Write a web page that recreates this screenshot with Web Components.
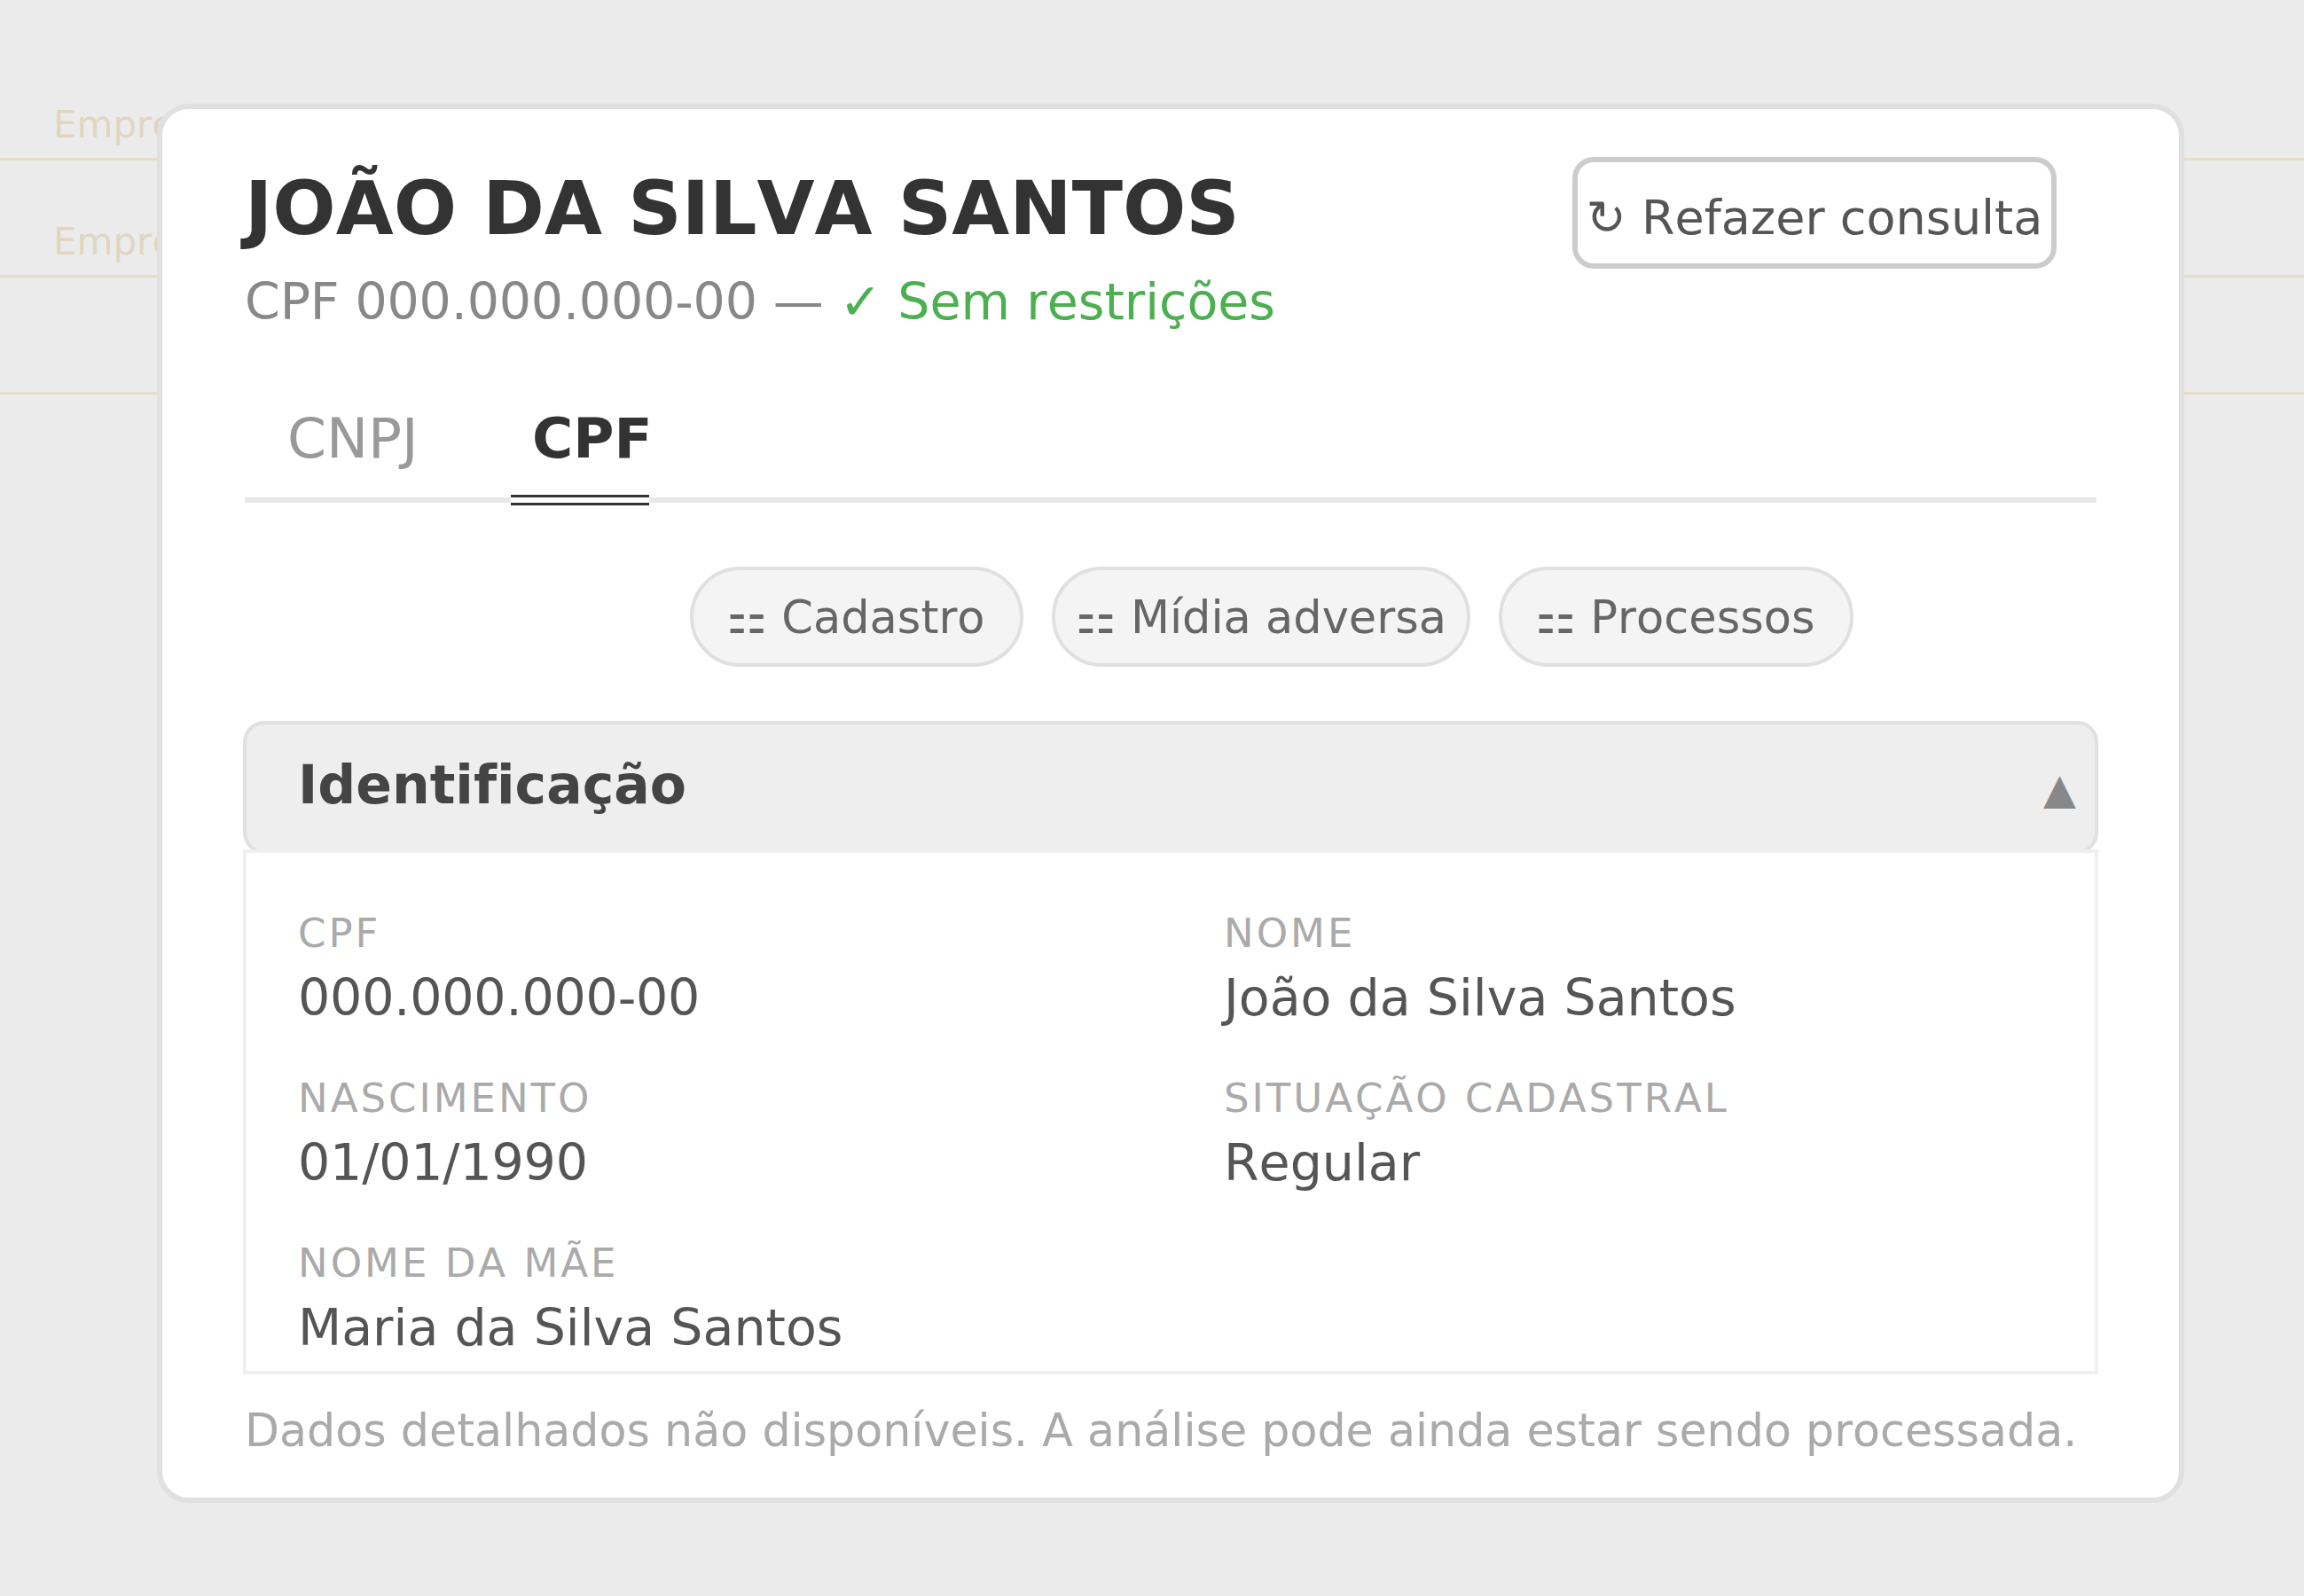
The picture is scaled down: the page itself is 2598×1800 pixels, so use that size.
<!DOCTYPE html>
<html lang="pt-BR">
<head>
<meta charset="utf-8">
<title>Consulta</title>
<style>
  html, body { margin: 0; height: 100%; overflow: hidden; }
  body {
    background: #ebebeb;
    font-family: "DejaVu Sans", sans-serif;
    font-kerning: none;
    font-variant-ligatures: none;
  }
</style>
</head>
<body>
<back-rows>
  <back-row>Empresa</back-row>
  <back-row>Empresa</back-row>
  <back-row></back-row>
</back-rows>

<person-modal>
  <span slot="title">JOÃO DA SILVA SANTOS</span>
  <span slot="cpf" style="letter-spacing:-.17px">CPF 000.000.000-00 — </span>
  <span slot="status">✓ Sem restrições</span>
  <span slot="action">↻ Refazer consulta</span>

  <tab-bar slot="tabs">
    <tab-item>CNPJ</tab-item>
    <tab-item active>CPF</tab-item>
  </tab-bar>

  <pill-row slot="pills">
    <pill-button style="width:376px;padding-right:2px">⚏ Cadastro</pill-button>
    <pill-button style="width:472px">⚏ Mídia adversa</pill-button>
    <pill-button style="width:400px;padding-right:2px">⚏ Processos</pill-button>
  </pill-row>

  <data-section slot="section" heading="Identificação">
    <data-field label="CPF" style="letter-spacing:-.18px">000.000.000-00</data-field>
    <data-field label="Nome">João da Silva Santos</data-field>
    <data-field label="Nascimento" style="letter-spacing:-.18px">01/01/1990</data-field>
    <data-field label="Situação cadastral">Regular</data-field>
    <data-field label="Nome da mãe">Maria da Silva Santos</data-field>
  </data-section>

  <span slot="note">Dados detalhados não disponíveis. A análise pode ainda estar sendo processada.</span>
</person-modal>

<script>
function define(name, html, setup) {
  customElements.define(name, class extends HTMLElement {
    constructor() {
      super();
      this.attachShadow({mode: 'open'}).innerHTML = html;
      if (setup) setup(this);
    }
  });
}

define('back-rows', `
  <style>
    :host { display: block; padding-top: 49px; }
  </style>
  <slot></slot>
`);

define('back-row', `
  <style>
    :host {
      display: flex;
      align-items: center;
      box-sizing: border-box;
      height: 132px;
      padding: 54px 0 0 60px;
      border-bottom: 3px solid #e6dcc8;
      color: #e0d6c0;
      font-size: 42px;
    }
  </style>
  <slot></slot>
`);

define('person-modal', `
  <style>
    :host {
      position: absolute;
      left: 177px;
      top: 117px;
      box-sizing: border-box;
      width: 2286px;
      height: 1578px;
      padding: 62px 93px 0;
      background: #fff;
      border: 6px solid #e0e0e0;
      border-radius: 36px;
      display: flex;
      flex-direction: column;
    }
    .top { display: flex; justify-content: space-between; align-items: flex-start; padding-right: 45px; }
    .title { font-size: 84px; line-height: 100px; font-weight: 700; color: #333; }
    .sub { margin-top: 21px; font-size: 57px; line-height: 68px; color: #888; white-space: nowrap; }
    .ok { color: #4caf50; }
    .action {
      box-sizing: border-box;
      width: 546px;
      height: 126px;
      margin-top: -8px;
      padding-top: 10px;
      display: flex;
      align-items: center;
      justify-content: center;
      border: 6px solid #ccc;
      border-radius: 24px;
      color: #555;
      font-size: 54px;
      white-space: nowrap;
    }
    .note { margin-top: 33px; font-size: 50.7px; line-height: 62px; color: #aaa; white-space: nowrap; }
  </style>
  <div class="top">
    <div>
      <div class="title"><slot name="title"></slot></div>
      <div class="sub"><slot name="cpf"></slot><span class="ok"><slot name="status"></slot></span></div>
    </div>
    <div class="action"><slot name="action"></slot></div>
  </div>
  <slot name="tabs"></slot>
  <slot name="pills"></slot>
  <slot name="section"></slot>
  <div class="note"><slot name="note"></slot></div>
`);

define('tab-bar', `
  <style>
    :host {
      display: flex;
      box-sizing: border-box;
      height: 127px;
      margin-top: 66px;
      padding-left: 48px;
      border-bottom: 6px solid #e8e8e8;
    }
  </style>
  <slot></slot>
`);

define('tab-item', `
  <style>
    :host {
      display: block;
      box-sizing: border-box;
      height: 130px;
      padding-top: 17px;
      width: 252px;
      font-size: 63px;
      line-height: 76px;
      color: #999;
    }
    :host([active]) {
      width: 156px;
      padding-left: 24px;
      font-weight: 700;
      color: #333;
      white-space: nowrap;
      background: linear-gradient(#333 0 3px, #fff 3px 9px, #333 9px 12px) bottom / 100% 12px no-repeat;
    }
  </style>
  <slot></slot>
`);

define('pill-row', `
  <style>
    :host { display: flex; gap: 32px; margin-top: 72px; padding-left: 502px; }
  </style>
  <slot></slot>
`);

define('pill-button', `
  <style>
    :host {
      display: flex;
      align-items: center;
      justify-content: center;
      box-sizing: border-box;
      height: 113px;
      padding-top: 2px;
      background: #f4f4f4;
      border: 4.5px solid #e0e0e0;
      border-radius: 60px;
      color: #666;
      font-size: 51px;
      white-space: nowrap;
    }
  </style>
  <slot></slot>
`);

define('data-section', `
  <style>
    :host { display: block; margin: 61px -2px 0; }
    .head {
      box-sizing: border-box;
      height: 150px;
      display: flex;
      align-items: center;
      justify-content: space-between;
      padding: 0 21px 7px 58px;
      background: #eee;
      border: 4.5px solid #e0e0e0;
      border-radius: 24px;
      color: #444;
    }
    .head b { font-size: 60px; font-weight: 700; }
    .head i { font-style: normal; font-size: 48px; color: #888; padding-top: 9px; }
    .body {
      position: relative;
      box-sizing: border-box;
      height: 592px;
      margin-top: -5px;
      overflow: hidden;
      padding: 66px 58px 0;
      background: #fff;
      border: 4.5px solid #f0f0f0;
      display: grid;
      grid-template-columns: 1fr 1fr;
      column-gap: 120px;
      row-gap: 55px;
      align-content: start;
      letter-spacing: 0;
    }
  </style>
  <div class="head"><b></b><i>▲</i></div>
  <div class="body"><slot></slot></div>
`, el => {
  el.shadowRoot.querySelector('b').textContent = el.getAttribute('heading');
});

define('data-field', `
  <style>
    :host { display: block; }
    .label { font-size: 45px; line-height: 50px; letter-spacing: 3px; text-transform: uppercase; color: #aaa; }
    .value { margin-top: 13px; font-size: 57px; line-height: 68px; color: #555; }
  </style>
  <div class="label"></div>
  <div class="value"><slot></slot></div>
`, el => {
  el.shadowRoot.querySelector('.label').textContent = el.getAttribute('label');
});
</script>
</body>
</html>
